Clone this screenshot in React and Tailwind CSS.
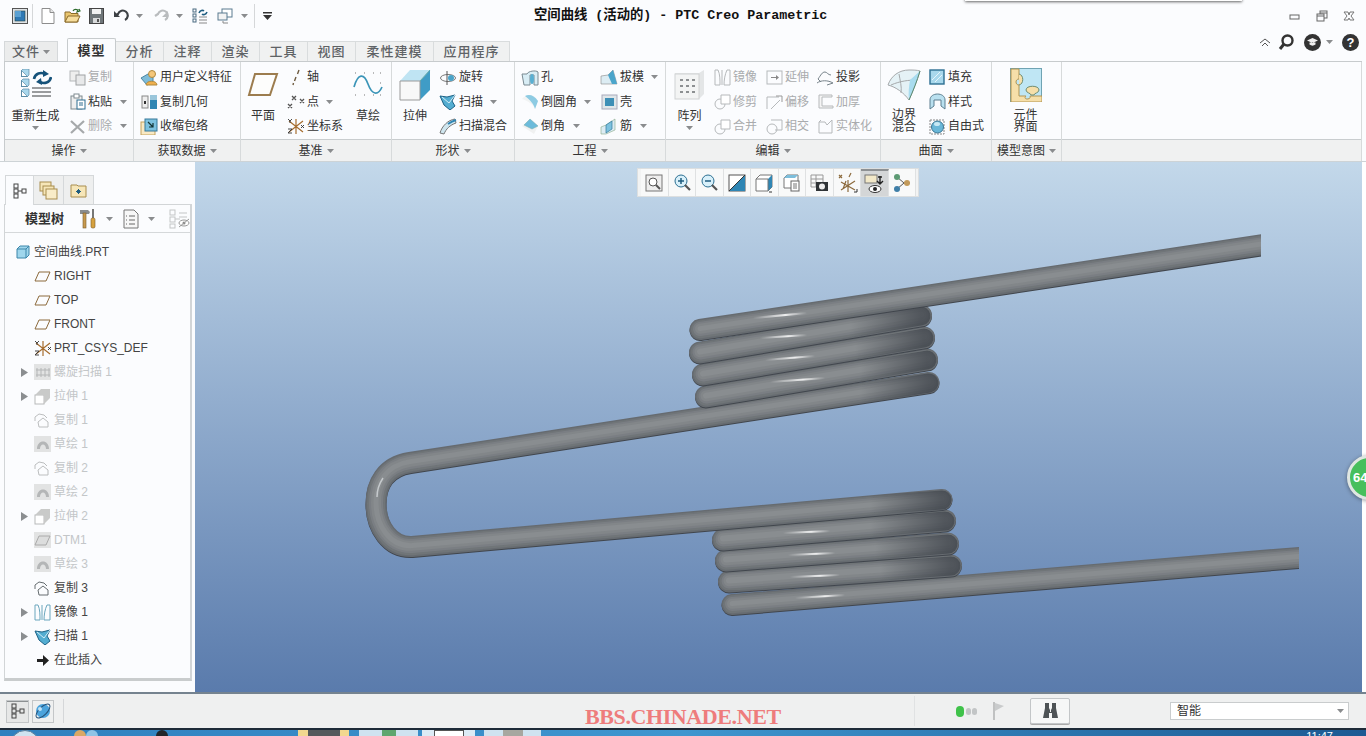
import React from 'react';

const I = ({ w = 17, h = 17, className = '', children }) => (
  <svg width={w} height={h} viewBox={`0 0 ${w} ${h}`} fill="none" className={`shrink-0 ${className}`}>
    {children}
  </svg>
);

const Caret = ({ className = '' }) => (
  <svg width="7" height="4" viewBox="0 0 7 4" className={`shrink-0 ${className}`}>
    <path d="M0 0h7L3.5 4z" fill="#8a8c8e" />
  </svg>
);

/* quick access */
const QWindow = () => (
  <I w={16} h={16}><rect x=".5" y=".5" width="15" height="15" fill="#dfe3e6" stroke="#555" /><rect x="3" y="3" width="10" height="10" fill="#2f79b5" stroke="#244" strokeWidth=".6" /><path d="M3 3h6v6H3z" fill="#5aa0d2" /></I>
);
const QNew = () => (
  <I w={14} h={16}><path d="M1 .5h8l4 4v11H1z" fill="#fff" stroke="#8d8d8d" /><path d="M9 .5v4h4" stroke="#8d8d8d" fill="#e6e6e6" /></I>
);
const QOpen = () => (
  <I w={17} h={16}><path d="M1 4h5l1 1.5h7V14H1z" fill="#e9c56f" stroke="#8a6a2a" /><path d="M1 14l3-6h12l-3 6z" fill="#f6dd9c" stroke="#8a6a2a" /><path d="M9 3c1-2 3-2 5-1l-1 2 3-1-1-2" stroke="#2d6b2d" strokeWidth="1.2" /></I>
);
const QSave = () => (
  <I w={15} h={16}><rect x=".5" y=".5" width="14" height="15" fill="#6f7679" stroke="#444" /><rect x="3" y="1" width="9" height="5" fill="#f1f2f2" /><rect x="4" y="10" width="7" height="5" fill="#d8dadb" /><rect x="8" y="11" width="2" height="3" fill="#555" /></I>
);
const QUndo = ({ off }) => (
  <I w={16} h={14}><path d={off ? 'M12 11a5 5 0 1 0-7-6L2 7' : 'M4 11a5 5 0 1 1 7-6l3 2'} stroke={off ? '#b9bcbe' : '#3d4145'} strokeWidth="2.2" transform={off ? '' : 'matrix(-1 0 0 1 16 0)'} /><path d={off ? 'M15 2v6H9z' : 'M1 2v6h6z'} fill={off ? '#b9bcbe' : '#3d4145'} /></I>
);
const QRegen = () => (
  <I w={16} h={16}><rect x="1" y="1" width="3" height="3" stroke="#4a6a80" /><rect x="1" y="6" width="3" height="3" stroke="#4a6a80" /><rect x="1" y="11" width="3" height="3" stroke="#4a6a80" /><path d="M7 5c1-3 4-3 5-2M15 4c-1 3-4 3-5 2" stroke="#1f5d80" strokeWidth="1.5" /><path d="M7 9h8M7 12h8M7 15h8" stroke="#888" /></I>
);
const QWins = () => (
  <I w={16} h={16}><rect x="5" y="1" width="10" height="8" fill="#fff" stroke="#5a7b90" /><rect x="1" y="5" width="9" height="7" fill="#f3f3f3" stroke="#5a7b90" /><path d="M6 13v2h5" stroke="#888" /></I>
);

/* large ribbon icons */
const Cube = ({ x, y }) => (
  <g transform={`translate(${x} ${y})`}><rect x=".5" y="1.5" width="6" height="6" fill="#fff" stroke="#5b8ba6" /><path d="M.5 1.5L2 0h6v6L6.5 7.5z" fill="#a9d7ec" stroke="#5b8ba6" strokeWidth=".7" /></g>
);
const RegenBig = () => (
  <I w={32} h={32}>
    <Cube x={1} y={0} /><Cube x={1} y={10} /><Cube x={1} y={20} />
    <path d="M14 10c1-6 7-7 11-5" stroke="#15527a" strokeWidth="2.6" /><path d="M23 1l6 4-6 3z" fill="#15527a" />
    <path d="M31 8c-1 6-7 7-11 5" stroke="#15527a" strokeWidth="2.6" /><path d="M22 16l-6-3 5-4z" fill="#15527a" />
    <path d="M12 19h19M12 23h19M12 27h19" stroke="#9a9c9e" strokeWidth="2" />
  </I>
);
const PlaneBig = () => (
  <I w={32} h={26}><path d="M8 2h22L23 23H2z" fill="#fdfdfc" stroke="#9c7c4e" strokeWidth="2" /></I>
);
const SketchBig = () => (
  <I w={30} h={30}>
    <path d="M2 3h1M11 3h1M20 3h1M27 3h1M2 13h1M27 13h1M2 25h1M11 25h1M20 25h1M27 25h1" stroke="#777" />
    <path d="M1 17C5 3 11 3 15 14s10 12 14 3" stroke="#3b95b8" strokeWidth="1.7" />
  </I>
);
const ExtrudeBig = () => (
  <I w={32} h={32}>
    <path d="M1 12L11 1h20v20L21 31H1z" fill="#fff" />
    <path d="M11 1h20L21 12H1z" fill="#bfe4f3" /><path d="M31 1v20L21 31V12z" fill="#3f9cc6" />
    <path d="M1 12h20v19H1z" fill="#f8f8f8" stroke="#9a9a9a" /><path d="M21 12L31 1" stroke="#6aa" />
  </I>
);
const PatternBig = () => (
  <I w={31} h={32}>
    <path d="M1 4h24l5-3v24l-5 5H1z" fill="#e4e6e7" /><rect x="1" y="5" width="24" height="25" fill="#f3f4f4" stroke="#d0d2d3" />
    <path d="M6 11h3M12 11h3M18 11h3M6 17h3M12 17h3M18 17h3M6 23h3M12 23h3M18 23h3" stroke="#8d9092" strokeWidth="2" />
  </I>
);
const BlendBig = () => (
  <I w={34} h={34}>
    <path d="M1 17C4 8 12 2 22 2c4 0 8 0 11 1-3 10-7 20-11 29-5-7-13-13-21-15z" fill="#e5f2f6" stroke="#a6a9ab" />
    <path d="M12 6c1 6 3 13 2 19M4 17c9-4 18-5 26-5" stroke="#a6a9ab" /><path d="M33 3c-3 10-7 20-11 29-1-7 0-13 1-20z" fill="#a9dcef" />
    <path d="M22 32c4-9 8-19 11-29" stroke="#5b8a70" />
  </I>
);
const PuzzleBig = () => (
  <I w={32} h={34}>
    <rect x=".5" y=".5" width="31" height="33" fill="#bfe6f4" stroke="#6fa3b3" />
    <path d="M1 1h8v10c-4 0-4 6 0 6v11h7c-4 4 6 4 4 0h12v6H1z" fill="#f6dfa9" stroke="#b29552" />
    <path d="M9 6c5 1 5 10 0 11M16 22c0-5 13-5 13 0 0 3-5 3-5 5h-3c0-2-5-2-5-5z" fill="#f6dfa9" stroke="#6f8c70" />
  </I>
);

/* small ribbon icons */
const ICopy = () => (
  <I><rect x="1" y="2" width="9" height="10" fill="#eee" stroke="#b5b8ba" /><rect x="7" y="6" width="9" height="10" fill="#e8e9ea" stroke="#9fa2a4" /></I>
);
const IPaste = () => (
  <I><rect x="2" y="3" width="11" height="13" fill="#eee" stroke="#7f8a8f" /><rect x="5" y="1" width="5" height="4" fill="#fff" stroke="#7f8a8f" /><rect x="8" y="7" width="8" height="9" fill="#fff" stroke="#2f6f92" /><path d="M10 10h4M10 12h4" stroke="#2f6f92" /></I>
);
const IDelete = () => (
  <I><path d="M2 3l13 12M15 3L2 15" stroke="#a6a9ab" strokeWidth="2.2" /></I>
);
const IUdf = () => (
  <I w={18}><path d="M1 9l7-4 5 3v6l-6 2z" fill="#7fbcd8" stroke="#4b86a3" /><circle cx="12" cy="5" r="3.5" fill="#f5c77a" stroke="#b08a3f" /><path d="M6 16c0-5 11-5 11 0z" fill="#efb04e" stroke="#b08a3f" /></I>
);
const ICopyGeom = () => (
  <I><rect x="1" y="3" width="6" height="12" fill="#eee" stroke="#888" /><path d="M3 8h2v3H3z" fill="#333" /><rect x="9" y="2" width="7" height="5" fill="#9ac6db" /><rect x="9" y="7" width="7" height="9" fill="#2f86b4" /></I>
);
const IShrink = () => (
  <I w={18}><rect x="1" y="4" width="14" height="13" fill="#f8e9c4" stroke="#c3a15d" /><rect x="5" y="1" width="12" height="12" fill="#7dc2df" stroke="#37799a" /><path d="M8 4l5 5M13 5v4H9" stroke="#133" strokeWidth="1.2" /></I>
);
const IAxis = () => (
  <I><path d="M11 1L9.5 5M8 8L6.5 12M5.5 14L5 16" stroke="#6d5a3f" strokeWidth="1.4" /></I>
);
const IPoint = () => (
  <I w={18}><path d="M5 3l4 4M9 3L5 7M13 6l4 4M17 6l-4 4M1 11l4 4M5 11l-4 4" stroke="#555" strokeWidth="1.3" /></I>
);
const ICsys = ({ gray }) => (
  <I w={18}>
    <path d="M9 1v15M2 3l14 11M2 14L16 3" stroke={gray ? '#999' : '#a66d2f'} strokeWidth="1.2" />
    <path d="M1 1l2 2 2-2M3 3v2M1 11h4l-4 4h4M14 7l3 3M17 7l-3 3" stroke="#333" strokeWidth=".9" />
  </I>
);
const IRevolve = () => (
  <I w={18}><ellipse cx="9" cy="9" rx="7.5" ry="3.5" stroke="#777" /><circle cx="12" cy="9" r="3" fill="#4aa4c9" /><path d="M8 2v14" stroke="#555" /></I>
);
const ISweep = () => (
  <I w={18}><path d="M1 3l7 1 8-2-3 6 3 5-5 4-6-5z" fill="#53add1" stroke="#1e6286" /><path d="M3 4l7 6 6-8" stroke="#d3edf7" /></I>
);
const ISweepBlend = () => (
  <I w={18}><path d="M1 15C3 8 9 2 16 1l1 4C11 7 7 11 5 16z" fill="#cfe6ef" stroke="#777" /><path d="M9 6c3-2 5-3 8-4" stroke="#2f86b4" strokeWidth="2" /></I>
);
const IHole = () => (
  <I w={18}><path d="M1 5h5c1-3 9-4 11-2v13h-4V6H9v10H3z" fill="#d8edf5" stroke="#7a8a92" /><ellipse cx="11" cy="10" rx="2" ry="5" fill="#59afd2" /></I>
);
const IRound = () => (
  <I w={18}><path d="M1 6c4-5 10-5 13-2l3 4-3 8C12 11 7 8 1 6z" fill="#f1f3f3" /><path d="M4 3c4-2 9-1 13 5l-3 8c-1-5-5-9-10-13z" fill="#8dcbe3" /></I>
);
const IChamfer = () => (
  <I w={18}><path d="M1 8l8-7 8 7-4 8z" fill="#f0f1f1" /><path d="M3 7l6-6 8 7-6 3z" fill="#6cbbdb" stroke="#7aa" strokeWidth=".5" /></I>
);
const IDraft = () => (
  <I w={18}><path d="M1 15V7l7-1 5-5 4 14z" fill="#dcecf3" stroke="#888" strokeWidth=".6" /><path d="M8 6l5-5 4 14h-5z" fill="#4ba5cb" /></I>
);
const IShell = () => (
  <I><rect x="1" y="2" width="15" height="14" fill="#dfe6e9" stroke="#aab" /><rect x="4" y="5" width="9" height="8" fill="#3e8fb6" /></I>
);
const IRib = () => (
  <I w={18}><path d="M1 9l5-2 9-6v11L6 16H1z" fill="#dcecf3" stroke="#8a8" strokeWidth=".6" /><path d="M6 7l6-4v8l-6 4z" fill="#7dc2df" stroke="#33789a" strokeWidth=".7" /></I>
);
const gs = '#b6b9bb';
const IMirror = ({ c = gs, c2 = gs }) => (
  <I><path d="M1 1h3c2 4 2 10 2 15H1z" stroke={c} /><path d="M16 1h-3c-2 4-3 10-3 15h6z" stroke={c2} /><path d="M8 1v15" stroke={c} /></I>
);
const ITrim = () => (
  <I><circle cx="6" cy="11" r="5" stroke={gs} /><path d="M7 2h9v9H7z" fill="#fff" stroke={gs} /></I>
);
const IExtend = () => (
  <I><rect x="1" y="2" width="15" height="13" stroke={gs} /><path d="M5 8.500h6" stroke="#888" /><path d="M10 6l3 2.500-3 2.500z" fill="#888" /></I>
);
const IOffset = () => (
  <I><path d="M1 16V4h12M5 16l9-9" stroke={gs} /><path d="M10 3h6v6" stroke="#999" /></I>
);
const IIntersect = () => (
  <I><circle cx="6" cy="11" r="5" stroke={gs} /><path d="M5 2h11v10H9" stroke={gs} /></I>
);
const IProject = () => (
  <I w={18}><path d="M2 10c3-4 4-7 7-7 2 0 3 3 6 3M1 14c4-3 11-3 16 0l-6 2" stroke="#77838a" /><path d="M2 10l3 3" stroke="#77838a" /></I>
);
const IThicken = () => (
  <I><path d="M2 2h13v2H5v9h11v2H2z" fill="#f5f5f5" stroke={gs} /></I>
);
const ISolidify = () => (
  <I><path d="M2 4h6l2 3 5-5v13H2z" stroke={gs} /><path d="M2 4l2-2" stroke={gs} /></I>
);
const IFill = () => (
  <I w={16} h={16}><rect x="1" y="1" width="14" height="14" fill="#a8d8ec" stroke="#2d6f92" strokeWidth="1.4" /><path d="M3 11l8-8M6 13l7-7" stroke="#e5f5fb" /></I>
);
const IStyle = () => (
  <I><path d="M1 16V7c0-8 15-8 15 0v9l-4-3V7H5v6z" fill="#b9e0ef" stroke="#5d7f90" /></I>
);
const IFree = () => (
  <I><rect x="1" y="2" width="14" height="14" stroke="#888" strokeDasharray="2 1" /><circle cx="8.500" cy="9" r="6" fill="#69b7d8" stroke="#3b7592" /><ellipse cx="8" cy="6" rx="3" ry="2" fill="#c7e8f4" /></I>
);

/* tree icons */
const TPart = () => (
  <I w={14} h={14}><path d="M1 4l3-3h9v9l-3 3H1z" fill="#9fd6ec" stroke="#3d86aa" /><path d="M1 4h9v9M10 4l3-3" stroke="#3d86aa" /></I>
);
const TPlane = ({ gray }) => (
  <I><path d="M5 4h11l-4 9H1z" fill={gray ? '#dcdddd' : 'none'} stroke={gray ? '#aaa' : '#8c6a3c'} /></I>
);
const GrayBox = ({ children }) => <span className="flex w-[17px] h-[16px] items-center justify-center bg-[#e2e3e3]">{children}</span>;
const THelix = () => (
  <GrayBox><I w={16} h={14}><path d="M2 3v9M6 3v9M10 3v9M14 3v9M1 5h14M1 10h14" stroke="#b4b6b7" /></I></GrayBox>
);
const TExtrude = () => (
  <I><rect x="1" y="7" width="9" height="9" fill="#fff" stroke="#b8b9ba" /><path d="M1 7l6-6h9v9l-6 6V7z" fill="#c9cac9" /></I>
);
const TCopy = ({ dark }) => {
  const c = dark ? '#666d70' : '#bcbebf';
  return <I><path d="M1 9V5l4-3 5 1 3 3M5 15l-1-5 5-4 5 4v5z" stroke={c} /></I>;
};
const TSketch = () => (
  <GrayBox><I w={16} h={14}><path d="M2 12c0-10 12-10 12 0h-3c0-6-6-6-6 0z" fill="#b4b6b7" /></I></GrayBox>
);

const Arrow = () => (
  <I><path d="M3 7h6V3l6 5.500-6 5.500v-4H3z" fill="#222" /></I>
);

/* graphics toolbar */
const toolbar = [
  <I w={18} h={18} key="a"><rect x="1" y="1" width="16" height="16" fill="#eee" stroke="#777" /><circle cx="8" cy="8" r="4" fill="#fff" stroke="#555" /><path d="M11 11l4 4" stroke="#555" strokeWidth="2" /></I>,
  <I w={18} h={18} key="b"><circle cx="8" cy="7" r="6" fill="#d8f0fa" stroke="#2b6f92" /><path d="M5 7h6M8 4v6" stroke="#1f5d80" strokeWidth="1.5" /><path d="M12 11l5 5" stroke="#555" strokeWidth="2.2" /></I>,
  <I w={18} h={18} key="c"><circle cx="8" cy="7" r="6" fill="#d8f0fa" stroke="#2b6f92" /><path d="M5 7h6" stroke="#1f5d80" strokeWidth="1.5" /><path d="M12 11l5 5" stroke="#555" strokeWidth="2.2" /></I>,
  <I w={18} h={18} key="d"><rect x="1" y="1" width="16" height="16" fill="#fff" stroke="#555" /><path d="M1 17L17 1v16z" fill="#2f86b4" /><path d="M1 17L17 1" stroke="#333" /></I>,
  <I w={20} h={20} key="e"><path d="M2 6l4-4h12v12l-4 4H2z" fill="#fff" stroke="#777" /><path d="M14 6l4-4v12l-4 4z" fill="#2f86b4" /><path d="M2 6h12v12" stroke="#777" /><path d="M18 19h-3" stroke="#333" /></I>,
  <I w={20} h={20} key="f"><path d="M2 5l3-3h11v13H2z" fill="#fff" stroke="#777" /><path d="M5 2l11 0-3 3H2z" fill="#7dbedb" /><rect x="9" y="8" width="8" height="10" fill="#fff" stroke="#666" /><path d="M11 11h4M11 13h4M11 15h4" stroke="#777" /></I>,
  <I w={20} h={20} key="g"><path d="M2 2h12v12H2zM2 6h12M2 10h12M7 2v12" stroke="#999" /><rect x="7" y="9" width="12" height="9" fill="#2f3336" /><circle cx="13" cy="13.500" r="3" fill="#eee" /></I>,
  <I w={22} h={22} key="h"><path d="M3 3l3 3M6 3L3 6M15 1l-2 4M10 9L7 17M12 8v12M5 10l14 8M5 18l14-9" stroke="#8c6a3c" strokeWidth="1.2" /><path d="M18 20h3v-3" stroke="#333" /></I>,
  <I w={22} h={22} key="i"><rect x="2" y="2" width="12" height="8" fill="#f2e8c8" stroke="#777" /><path d="M17 3v8M14 8l3 3 3-3M15 4h4" stroke="#222" strokeWidth="1.4" /><ellipse cx="12" cy="16" rx="6" ry="3.500" fill="#fff" stroke="#333" /><circle cx="12" cy="16" r="2" fill="#222" /></I>,
  <I w={20} h={20} key="j"><path d="M5 4l7 6-7 6" stroke="#555" /><path d="M12 10h6" stroke="#555" /><circle cx="5" cy="4" r="3" fill="#5c9a73" /><circle cx="5" cy="16" r="3" fill="#3f7fa8" /><circle cx="15" cy="10" r="3" fill="#c29a5b" /></I>,
];

/* ribbon pieces */
const Item = ({ icon, label, caret, off }) => (
  <div className="flex items-center h-[24.5px]">
    <span className="flex w-[18px] h-[18px] items-center justify-center shrink-0">{icon}</span>
    <span className={`ml-[2px] text-[12px] leading-none whitespace-nowrap ${off ? 'text-[#a9abad]' : 'text-[#333]'}`}>{label}</span>
    {caret && <Caret className={caret} />}
  </div>
);

const Big = ({ w, icon, label, caret, two }) => (
  <div className={`${w} flex flex-col items-center pt-[6px] shrink-0`}>
    <div className="h-[34px] flex items-center justify-center">{icon}</div>
    {two ? (
      <div className="mt-[7px] text-[12px] leading-[12px] text-[#333] text-center whitespace-pre">{label}</div>
    ) : (
      <div className="mt-[6px] text-[12px] leading-[16px] text-[#333] whitespace-nowrap">{label}</div>
    )}
    {caret && <Caret className="mt-[2px]" />}
  </div>
);

const Col = ({ className = '', children }) => <div className={`flex flex-col pt-[3px] ${className}`}>{children}</div>;

const Group = ({ w, label, children }) => (
  <div className={`${w} flex flex-col border-r border-[#d7dadb] shrink-0`}>
    <div className="h-[77px] flex">{children}</div>
    <div className="h-[22px] border-t border-[#c9cdcf] bg-[#f0f1f1] flex items-center justify-center gap-[4px] text-[12px] text-[#333]">
      {label}<Caret />
    </div>
  </div>
);

const Tab = ({ w, label }) => (
  <div className={`${w} h-[20px] flex items-center justify-center bg-[#f0f1f1] border-t border-r border-[#d9dcdd] text-[13px] tracking-[1px] font-medium text-[#5f6366]`}>
    {label}
  </div>
);

/* spring */
const Tube = ({ d, wide }) => {
  const k = wide ? 1 : 0;
  return (
    <g fill="none" strokeLinecap="round" strokeLinejoin="round">
      <path d={d} stroke="#41464d" strokeWidth={21 + k} transform="translate(0 .5)" />
      <path d={d} stroke="#666b70" strokeWidth={21 + k} transform="translate(0 -.5)" />
      <g filter="url(#soft)">
        <path d={d} stroke="#6f7478" strokeWidth={18 + k} transform="translate(0 -.7)" />
        <path d={d} stroke="#7a7e83" strokeWidth={14 + k} transform="translate(0 -1)" />
        <path d={d} stroke="#828689" strokeWidth={10 + k} transform="translate(0 -1.2)" />
        <path d={d} stroke="#898d90" strokeWidth={5 + k} transform="translate(0 -1.4)" />
      </g>
    </g>
  );
};
const Shade = ({ x1, y1, x2, y2 }) => (
  <path d={`M${x1} ${y1}L${x2} ${y2}`} stroke="url(#endDark)" strokeWidth="19" strokeLinecap="round" fill="none" />
);
const Glint = ({ x1, y1, x2, y2 }) => (
  <path d={`M${x1} ${y1}L${x2} ${y2}`} stroke="url(#glint)" strokeWidth="2.2" fill="none" filter="url(#soft)" />
);

const Spring = () => (
  <svg viewBox="195 162 1167 530" className="absolute inset-0 w-full h-full">
    <defs>
      <filter id="soft" x="-10%" y="-50%" width="120%" height="200%"><feGaussianBlur stdDeviation="0.6" /></filter>
      <linearGradient id="endDark" x1="0" x2="1" y1="0" y2="0">
        <stop offset="0" stopColor="#3f444b" stopOpacity="0" /><stop offset="1" stopColor="#3f444b" stopOpacity=".75" />
      </linearGradient>
      <linearGradient id="glint" x1="0" x2="1" y1="0" y2="0">
        <stop offset="0" stopColor="#fff" stopOpacity="0" /><stop offset=".6" stopColor="#fff" stopOpacity=".85" /><stop offset="1" stopColor="#fff" stopOpacity="0" />
      </linearGradient>
      <clipPath id="ends"><path d="M195 162H1261V400H1299V692H195z" /></clipPath>
    </defs>
    <g clipPath="url(#ends)">
      <Tube d="M732 605L1310 557" />
      <Glint x1={795} y1={598} x2={845} y2={595} />
      <Tube wide d="M729 582L951 566" /><Shade x1={880} y1={571} x2={951} y2={566} />
      <Glint x1={790} y1={577} x2={840} y2={575} />
      <Tube wide d="M726 561L948 544" /><Shade x1={875} y1={550} x2={948} y2={544} />
      <Glint x1={788} y1={555} x2={835} y2={553} />
      <Tube wide d="M723 540L945 521" /><Shade x1={870} y1={527} x2={945} y2={521} />
      <Glint x1={783} y1={533} x2={830} y2={531} />
      <Tube d="M929 383L410 463C385 467 376 485 376 504C376 527 390 548 412 547L942 500" />
      <Shade x1={870} y1={505} x2={942} y2={500} />
      <path d="M383 478C379 484 377 490 377 497" stroke="#c5c9cc" strokeWidth="1.5" fill="none" filter="url(#soft)" />
      <Shade x1={860} y1={394} x2={929} y2={383} />
      <Tube wide d="M706 397L927 360" /><Shade x1={860} y1={371} x2={927} y2={360} />
      <Glint x1={770} y1={382} x2={825} y2={378} />
      <Tube wide d="M703 375L924 338" /><Shade x1={855} y1={350} x2={924} y2={338} />
      <Glint x1={765} y1={360} x2={815} y2={356} />
      <Tube wide d="M700 353L921 316" /><Shade x1={850} y1={328} x2={921} y2={316} />
      <Glint x1={760} y1={338} x2={807} y2={335} />
      <Tube d="M700 330L1270 244" />
      <Glint x1={753} y1={318} x2={807} y2={313} />
    </g>
  </svg>
);

const tree = [
  { icon: <TPlane />, label: 'RIGHT' },
  { icon: <TPlane />, label: 'TOP' },
  { icon: <TPlane />, label: 'FRONT' },
  { icon: <ICsys />, label: 'PRT_CSYS_DEF' },
  { icon: <THelix />, label: '螺旋扫描 1', off: true, arrow: true },
  { icon: <TExtrude />, label: '拉伸 1', off: true, arrow: true },
  { icon: <TCopy />, label: '复制 1', off: true },
  { icon: <TSketch />, label: '草绘 1', off: true },
  { icon: <TCopy />, label: '复制 2', off: true },
  { icon: <TSketch />, label: '草绘 2', off: true },
  { icon: <TExtrude />, label: '拉伸 2', off: true, arrow: true },
  { icon: <GrayBox><TPlane gray /></GrayBox>, label: 'DTM1', off: true },
  { icon: <TSketch />, label: '草绘 3', off: true },
  { icon: <TCopy dark />, label: '复制 3' },
  { icon: <IMirror c="#6aa6bd" c2="#6aa6bd" />, label: '镜像 1', arrow: true },
  { icon: <ISweep />, label: '扫描 1', arrow: true },
  { icon: <Arrow />, label: '在此插入' },
];

const TreeIcon = () => (
  <I w={14} h={16}><rect x="1" y="1" width="4" height="4" stroke="#444" /><rect x="1" y="6" width="4" height="4" stroke="#444" /><rect x="1" y="11" width="4" height="4" stroke="#444" /><rect x="9" y="6" width="4" height="4" stroke="#444" /><path d="M5 8h4" stroke="#444" /></I>
);

const App = () => {
  return (
    <div className="relative w-[1366px] h-[736px] overflow-hidden flex flex-col bg-[#fbfcfe] font-['Liberation_Sans','Noto_Sans_CJK_SC',sans-serif]">
      {/* popup edge above the window */}
      <div className="absolute top-[-4px] left-[965px] w-[277px] h-[5px] bg-white shadow-[0_1px_3px_rgba(0,0,0,0.6)] z-10" />

      {/* title bar */}
      <div className="h-[38px] flex shrink-0">
        <div className="w-[534px] flex items-center h-[32px] shrink-0">
          <div className="ml-[12px]"><QWindow /></div>
          <div className="ml-[4px] w-px h-[24px] bg-[#d5d7d9]" />
          <div className="ml-[8px]"><QNew /></div>
          <div className="ml-[9px]"><QOpen /></div>
          <div className="ml-[8px]"><QSave /></div>
          <div className="ml-[9px]"><QUndo /></div>
          <Caret className="ml-[7px]" />
          <div className="ml-[10px]"><QUndo off /></div>
          <Caret className="ml-[7px]" />
          <div className="ml-[9px]"><QRegen /></div>
          <div className="ml-[9px]"><QWins /></div>
          <Caret className="ml-[8px]" />
          <div className="ml-[6px] w-px h-[24px] bg-[#d5d7d9]" />
          <svg width="9" height="8" viewBox="0 0 9 8" className="ml-[8px]"><path d="M0 0h9v1.500H0zM0 3h9L4.500 8z" fill="#333" /></svg>
        </div>
        <div className="h-[31px] flex items-center text-[13.33px] font-bold text-[#111] whitespace-pre font-['Liberation_Mono','Noto_Sans_CJK_SC',monospace]">
          空间曲线 (活动的) - PTC Creo Parametric
        </div>
        <div className="flex-1 flex items-start justify-end pt-[10px] pr-[11px] gap-[15px]">
          <I w={12} h={12}><rect x="1" y="5" width="9" height="4" stroke="#666" /></I>
          <I w={12} h={12}><rect x="4" y="1" width="7" height="7" fill="#fbfcfe" stroke="#666" /><rect x="1" y="4" width="7" height="7" fill="#fbfcfe" stroke="#666" /><path d="M1 6h7M4 3h7" stroke="#666" /></I>
          <I w={12} h={12}><path d="M1 2l4 0 1 3 1-3h4L8 6l3 4H7L6 8l-1 2H1l3-4z" stroke="#777" /></I>
        </div>
      </div>

      {/* tabs */}
      <div className="h-[23px] flex items-end pl-[4px] shrink-0 relative z-[1]">
        <div className="w-[54px] h-[20px] flex items-center justify-center gap-[3px] bg-[#ebecec] border border-b-0 border-[#d5d8da] text-[13px] tracking-[1px] font-medium text-[#5f6366]">
          文件<Caret />
        </div>
        <div className="ml-[9px] w-[49px] h-[24px] -mb-px flex items-center justify-center bg-[#fbfcfe] border border-b-0 border-[#c7cbcd] rounded-t-[2px] text-[13px] tracking-[1px] font-bold text-[#333]">
          模型
        </div>
        <Tab w="w-[48px]" label="分析" />
        <Tab w="w-[48px]" label="注释" />
        <Tab w="w-[48px]" label="渲染" />
        <Tab w="w-[48px]" label="工具" />
        <Tab w="w-[48px]" label="视图" />
        <Tab w="w-[78px]" label="柔性建模" />
        <Tab w="w-[76px]" label="应用程序" />
        <div className="flex-1 self-start flex items-center justify-end pr-[7px] gap-[4px] h-[14px] mt-[-3px]">
          <I w={13} h={10} className="mr-[2px]"><path d="M1 6l5-4 5 4M3 9l3-3 3 3" stroke="#555" fill="none" /></I>
          <I w={16} h={17} className="mr-[6px]"><circle cx="9.500" cy="6.500" r="5" stroke="#333" strokeWidth="2.4" /><path d="M6 10l-4 5" stroke="#333" strokeWidth="3" /></I>
          <span className="w-[17px] h-[17px] rounded-full bg-[#333] flex items-center justify-center">
            <I w={13} h={10}><path d="M1 3.500L6.500 1 12 3.500 6.500 6zM3.500 5.500v2c2 1.500 4 1.500 6 0v-2" fill="#f1f1f1" /></I>
          </span>
          <Caret className="ml-[1px] mr-[5px]" />
          <span className="w-[17px] h-[17px] rounded-full bg-[#333] flex items-center justify-center text-white text-[13px] font-bold leading-none">?</span>
        </div>
      </div>

      {/* ribbon */}
      <div className="mx-[4px] flex border-t border-l border-[#c7cbcd] shrink-0">
        <Group w="w-[129px]" label="操作">
          <Big w="w-[58px] pl-[3px]" icon={<RegenBig />} label="重新生成" caret />
          <Col className="ml-[5px]">
            <Item icon={<ICopy />} label="复制" off />
            <Item icon={<IPaste />} label="粘贴" caret="ml-[8px]" />
            <Item icon={<IDelete />} label="删除" off caret="ml-[8px]" />
          </Col>
        </Group>
        <Group w="w-[107px]" label="获取数据">
          <Col className="ml-[6px]">
            <Item icon={<IUdf />} label="用户定义特征" />
            <Item icon={<ICopyGeom />} label="复制几何" />
            <Item icon={<IShrink />} label="收缩包络" />
          </Col>
        </Group>
        <Group w="w-[151px]" label="基准">
          <Big w="w-[44px]" icon={<PlaneBig />} label="平面" />
          <Col className="w-[63px] ml-[2px]">
            <Item icon={<IAxis />} label="轴" />
            <Item icon={<IPoint />} label="点" caret="ml-[7px]" />
            <Item icon={<ICsys />} label="坐标系" />
          </Col>
          <Big w="w-[36px]" icon={<SketchBig />} label="草绘" />
        </Group>
        <Group w="w-[123px]" label="形状">
          <Big w="w-[46px]" icon={<ExtrudeBig />} label="拉伸" />
          <Col className="ml-[1px]">
            <Item icon={<IRevolve />} label="旋转" />
            <Item icon={<ISweep />} label="扫描" caret="ml-[7px]" />
            <Item icon={<ISweepBlend />} label="扫描混合" />
          </Col>
        </Group>
        <Group w="w-[151px]" label="工程">
          <Col className="w-[79px] ml-[6px]">
            <Item icon={<IHole />} label="孔" />
            <Item icon={<IRound />} label="倒圆角" caret="ml-[7px]" />
            <Item icon={<IChamfer />} label="倒角" caret="ml-[8px]" />
          </Col>
          <Col>
            <Item icon={<IDraft />} label="拔模" caret="ml-[7px]" />
            <Item icon={<IShell />} label="壳" />
            <Item icon={<IRib />} label="筋" caret="ml-[8px]" />
          </Col>
        </Group>
        <Group w="w-[215px]" label="编辑">
          <Big w="w-[47px]" icon={<PatternBig />} label="阵列" caret />
          <Col className="w-[52px]">
            <Item icon={<IMirror />} label="镜像" off />
            <Item icon={<ITrim />} label="修剪" off />
            <Item icon={<ITrim />} label="合并" off />
          </Col>
          <Col className="w-[51px]">
            <Item icon={<IExtend />} label="延伸" off />
            <Item icon={<IOffset />} label="偏移" off />
            <Item icon={<IIntersect />} label="相交" off />
          </Col>
          <Col>
            <Item icon={<IProject />} label="投影" />
            <Item icon={<IThicken />} label="加厚" off />
            <Item icon={<ISolidify />} label="实体化" off />
          </Col>
        </Group>
        <Group w="w-[111px]" label="曲面">
          <Big w="w-[46px]" two icon={<BlendBig />} label={'边界\n混合'} />
          <Col className="ml-[1px]">
            <Item icon={<IFill />} label="填充" />
            <Item icon={<IStyle />} label="样式" />
            <Item icon={<IFree />} label="自由式" />
          </Col>
        </Group>
        <Group w="w-[70px]" label="模型意图">
          <Big w="w-[67px]" two icon={<PuzzleBig />} label={'元件\n界面'} />
        </Group>
        <div className="flex-1 flex flex-col border-r border-[#d7dadb]">
          <div className="h-[77px]" />
          <div className="h-[22px] border-t border-[#c9cdcf] bg-[#f0f1f1]" />
        </div>
      </div>

      {/* main */}
      <div className="flex-1 flex min-h-0 border-t border-[#cdd3d6]">
        <div className="w-[195px] shrink-0 flex flex-col pt-[13px] pl-[4px] pr-[3px] pb-[11px] bg-[#fbfcfe]">
          <div className="flex h-[29px] shrink-0 pl-px">
            <div className="w-[29px] h-[30px] flex items-center justify-center bg-[#fbfcfe] border border-b-0 border-[#d5d8da] relative z-[1]"><TreeIcon /></div>
            <div className="w-[30px] flex items-center justify-center bg-[#eeefef] border-t border-r border-[#d5d8da]">
              <I w={19} h={19}><rect x="1" y="1" width="11" height="9" fill="#f6e6b8" stroke="#a88d4f" /><rect x="4" y="5" width="11" height="9" fill="#f6e6b8" stroke="#a88d4f" /><rect x="7" y="8" width="11" height="10" fill="#f9ecc8" stroke="#a88d4f" /></I>
            </div>
            <div className="w-[30px] flex items-center justify-center bg-[#eeefef] border-t border-r border-[#d5d8da]">
              <I w={17} h={15}><path d="M1 2h6l1 1h8v11H1z" fill="#f6e6b8" stroke="#a88d4f" /><path d="M6 8.500h5M8.500 6v5M7 7l3 3M10 7l-3 3" stroke="#1f5d80" /></I>
            </div>
          </div>
          <div className="flex-1 border-r-2 border-l border-b-[3px] border-t border-r-[#d2d5d7] border-l-[#d2d5d7] border-b-[#c9cccd] border-t-[#d2d5d7] bg-[#fbfcfe]">
            <div className="h-[28px] flex items-center border-b border-[#d5d8da]">
              <span className="ml-[20px] text-[13px] font-bold text-[#333]">模型树</span>
              <I w={18} h={21} className="ml-[15px]"><path d="M1 2h8l2 2-1 2H1z" fill="#8a8d8f" /><rect x="4" y="5" width="3" height="15" fill="#c89a4f" stroke="#7a5a28" strokeWidth=".6" /><rect x="13" y="1" width="2" height="9" fill="#777" /><rect x="12" y="10" width="4" height="10" rx="1.500" fill="#d6a13f" stroke="#7a5a28" strokeWidth=".6" /></I>
              <Caret className="ml-[9px]" />
              <I w={16} h={20} className="ml-[10px]"><path d="M1 1h10l4 4v14H1z" fill="#f7f7f7" stroke="#777" /><path d="M6 7h6M6 11h6M6 15h6M3 7h1M3 11h1M3 15h1" stroke="#666" /></I>
              <Caret className="ml-[9px]" />
              <I w={21} h={20} className="ml-[14px]"><rect x="1" y="1" width="5" height="5" stroke="#c3c5c6" /><rect x="1" y="8" width="5" height="5" stroke="#c3c5c6" /><rect x="1" y="15" width="5" height="4" stroke="#c3c5c6" /><path d="M6 10h5M10 4h8M10 8h8" stroke="#c3c5c6" /><ellipse cx="15" cy="14" rx="5" ry="3" fill="#fff" stroke="#999" /><circle cx="15" cy="14" r="1.500" fill="#888" /><path d="M10 18l10-8" stroke="#999" /></I>
            </div>
            <div className="pt-[7px]">
              <div className="h-[24px] flex items-center">
                <div className="ml-[11px]"><TPart /></div>
                <span className="ml-[4px] text-[12px] text-[#444]">空间曲线.PRT</span>
              </div>
              {tree.map((row) => (
                <div key={row.label} className="h-[24px] flex items-center">
                  <span className="ml-[16px] w-[8px] shrink-0">
                    {row.arrow && <svg width="8" height="9" viewBox="0 0 8 9"><path d="M0 0l7 4.500L0 9z" fill="#8b8e90" /></svg>}
                  </span>
                  <span className="ml-[5px] w-[17px] flex justify-center shrink-0">{row.icon}</span>
                  <span className={`ml-[3px] text-[12px] whitespace-nowrap ${row.off ? 'text-[#c3c6c8]' : 'text-[#444]'}`}>{row.label}</span>
                </div>
              ))}
            </div>
          </div>
        </div>

        {/* graphics window */}
        <div className="relative flex-1 bg-gradient-to-b from-[#c3d8ea] to-[#5a7bac]">
          <Spring />
          <div className="absolute left-[442px] top-[6px] w-[282px] h-[29px] pl-[3px] flex items-center bg-[#f2f3f3] border border-[#dcdfe0]">
            {toolbar.map((icon, i) => (
              <div key={i} className={`w-[27.500px] h-[27px] flex items-center justify-center border-r border-[#dfe1e2] ${i === 8 ? 'bg-[#d4d6d7] border-t-2 border-t-[#8d9092]' : 'bg-[#f8f9f9]'}`}>
                {icon}
              </div>
            ))}
          </div>
        </div>
        <div className="w-[4px] shrink-0 bg-white" />
      </div>

      {/* floating badge */}
      <div className="absolute left-[1347px] top-[455px] w-[45px] h-[45px] rounded-full bg-[#47bf5c] border-[3px] border-[#dfe6e2] shadow-[0_1px_4px_rgba(0,0,0,0.4)] flex items-center pl-[3px] text-[13px] font-bold text-white z-10">
        64
      </div>

      {/* status bar */}
      <div className="relative h-[36px] shrink-0 flex items-center border-t-2 border-[#75838f] bg-[#eff0f0]">
        <div className="ml-[6px] w-[23px] h-[23px] flex items-center justify-center bg-[#e6e7e7] border border-[#c3c6c8] shadow-[inset_0_1px_0_#8c9092]"><TreeIcon /></div>
        <div className="ml-[3px] w-[22px] h-[23px] flex items-center justify-center border border-[#c3c6c8]">
          <I w={18} h={18}><circle cx="9" cy="9" r="7" fill="#4ba3dc" /><ellipse cx="9" cy="9" rx="9" ry="4" stroke="#25527a" transform="rotate(-45 9 9)" /><circle cx="6" cy="7" r="2" fill="#bfe2f7" /></I>
        </div>
        <div className="ml-[9px] w-px h-[24px] bg-[#d5d7d9]" />
        <div className="ml-auto flex items-center">
          <div className="mr-[41px] w-px h-[30px] bg-[#e0e2e3]" />
          <span className="w-[8px] h-[11px] rounded-full bg-[#3fc24a]" />
          <span className="ml-[2px] w-[5px] h-[7px] rounded-full bg-[#c2c5c6]" />
          <span className="ml-[1px] w-[5px] h-[7px] rounded-full bg-[#c2c5c6]" />
          <I w={14} h={20} className="ml-[15px]"><path d="M2 1v18" stroke="#b4b6b7" strokeWidth="1.6" /><path d="M3 2l9 3-9 5z" fill="#c9cbcc" /></I>
          <div className="ml-[24px] w-[40px] h-[26px] flex items-center justify-center border border-[#c3c6c8] bg-[#f6f7f7] shadow-[0_1px_0_#aaa] rounded-[2px]">
            <I w={17} h={18}><path d="M3 1h4v5l1 2v2h1V8l1-2V1h4v5l2 10h-6v-5H7v5H1l2-10z" fill="#4e5356" /></I>
          </div>
          <div className="ml-[100px] mr-[17px] w-[179px] h-[18px] flex items-center bg-white border border-[#c9cccd] pl-[6px] pr-[4px] text-[12px] text-[#333]">
            智能
            <Caret className="ml-auto" />
          </div>
        </div>
        <span className="absolute left-[585px] top-[11px] text-[22px] tracking-[-0.4px] leading-[24px] font-bold text-[#ee7c7c] whitespace-nowrap font-['Liberation_Serif',serif]">BBS.CHINADE.NET</span>
      </div>

      {/* taskbar, mostly cut off by the window bottom */}
      <div className="relative h-[8px] shrink-0 flex items-start overflow-hidden border-t-2 border-[#1e2b38] bg-gradient-to-r from-[#2f80bf] via-[#3f96cf] to-[#1c5a93]">
        <span className="ml-[10px] w-[30px] h-[30px] rounded-full bg-[#cfe3f0] border border-[#5d7f9a] shrink-0" />
        <span className="ml-[34px] w-[12px] h-[12px] rounded-full bg-[#d9a866] shrink-0" />
        <span className="w-[12px] h-[12px] rounded-full bg-[#8fc4e6] shrink-0" />
        <span className="ml-[58px] w-[12px] h-[12px] rounded-full bg-[#22262a] shrink-0" />
        <div className="ml-[130px] w-[51px] h-[8px] bg-[#f2d78f] flex justify-center shrink-0"><span className="w-[32px] bg-[#55595c]" /></div>
        <div className="ml-[10px] w-[59px] h-[8px] bg-[#cfe3f0] flex justify-center shrink-0"><span className="w-[14px] bg-[#5ea66f]" /></div>
        <div className="ml-[4px] w-[53px] h-[8px] bg-[#dcebf5] flex justify-center shrink-0"><span className="w-[30px] bg-white border border-[#555]" /></div>
        <div className="ml-[9px] w-[57px] h-[8px] bg-[#cfe3f0] flex justify-center shrink-0"><span className="w-[20px] bg-[#a7a7a0]" /></div>
        <span className="ml-auto mr-[33px] text-[11px] leading-[12px] text-white">11:47</span>
      </div>
    </div>
  );
};

export default App;
